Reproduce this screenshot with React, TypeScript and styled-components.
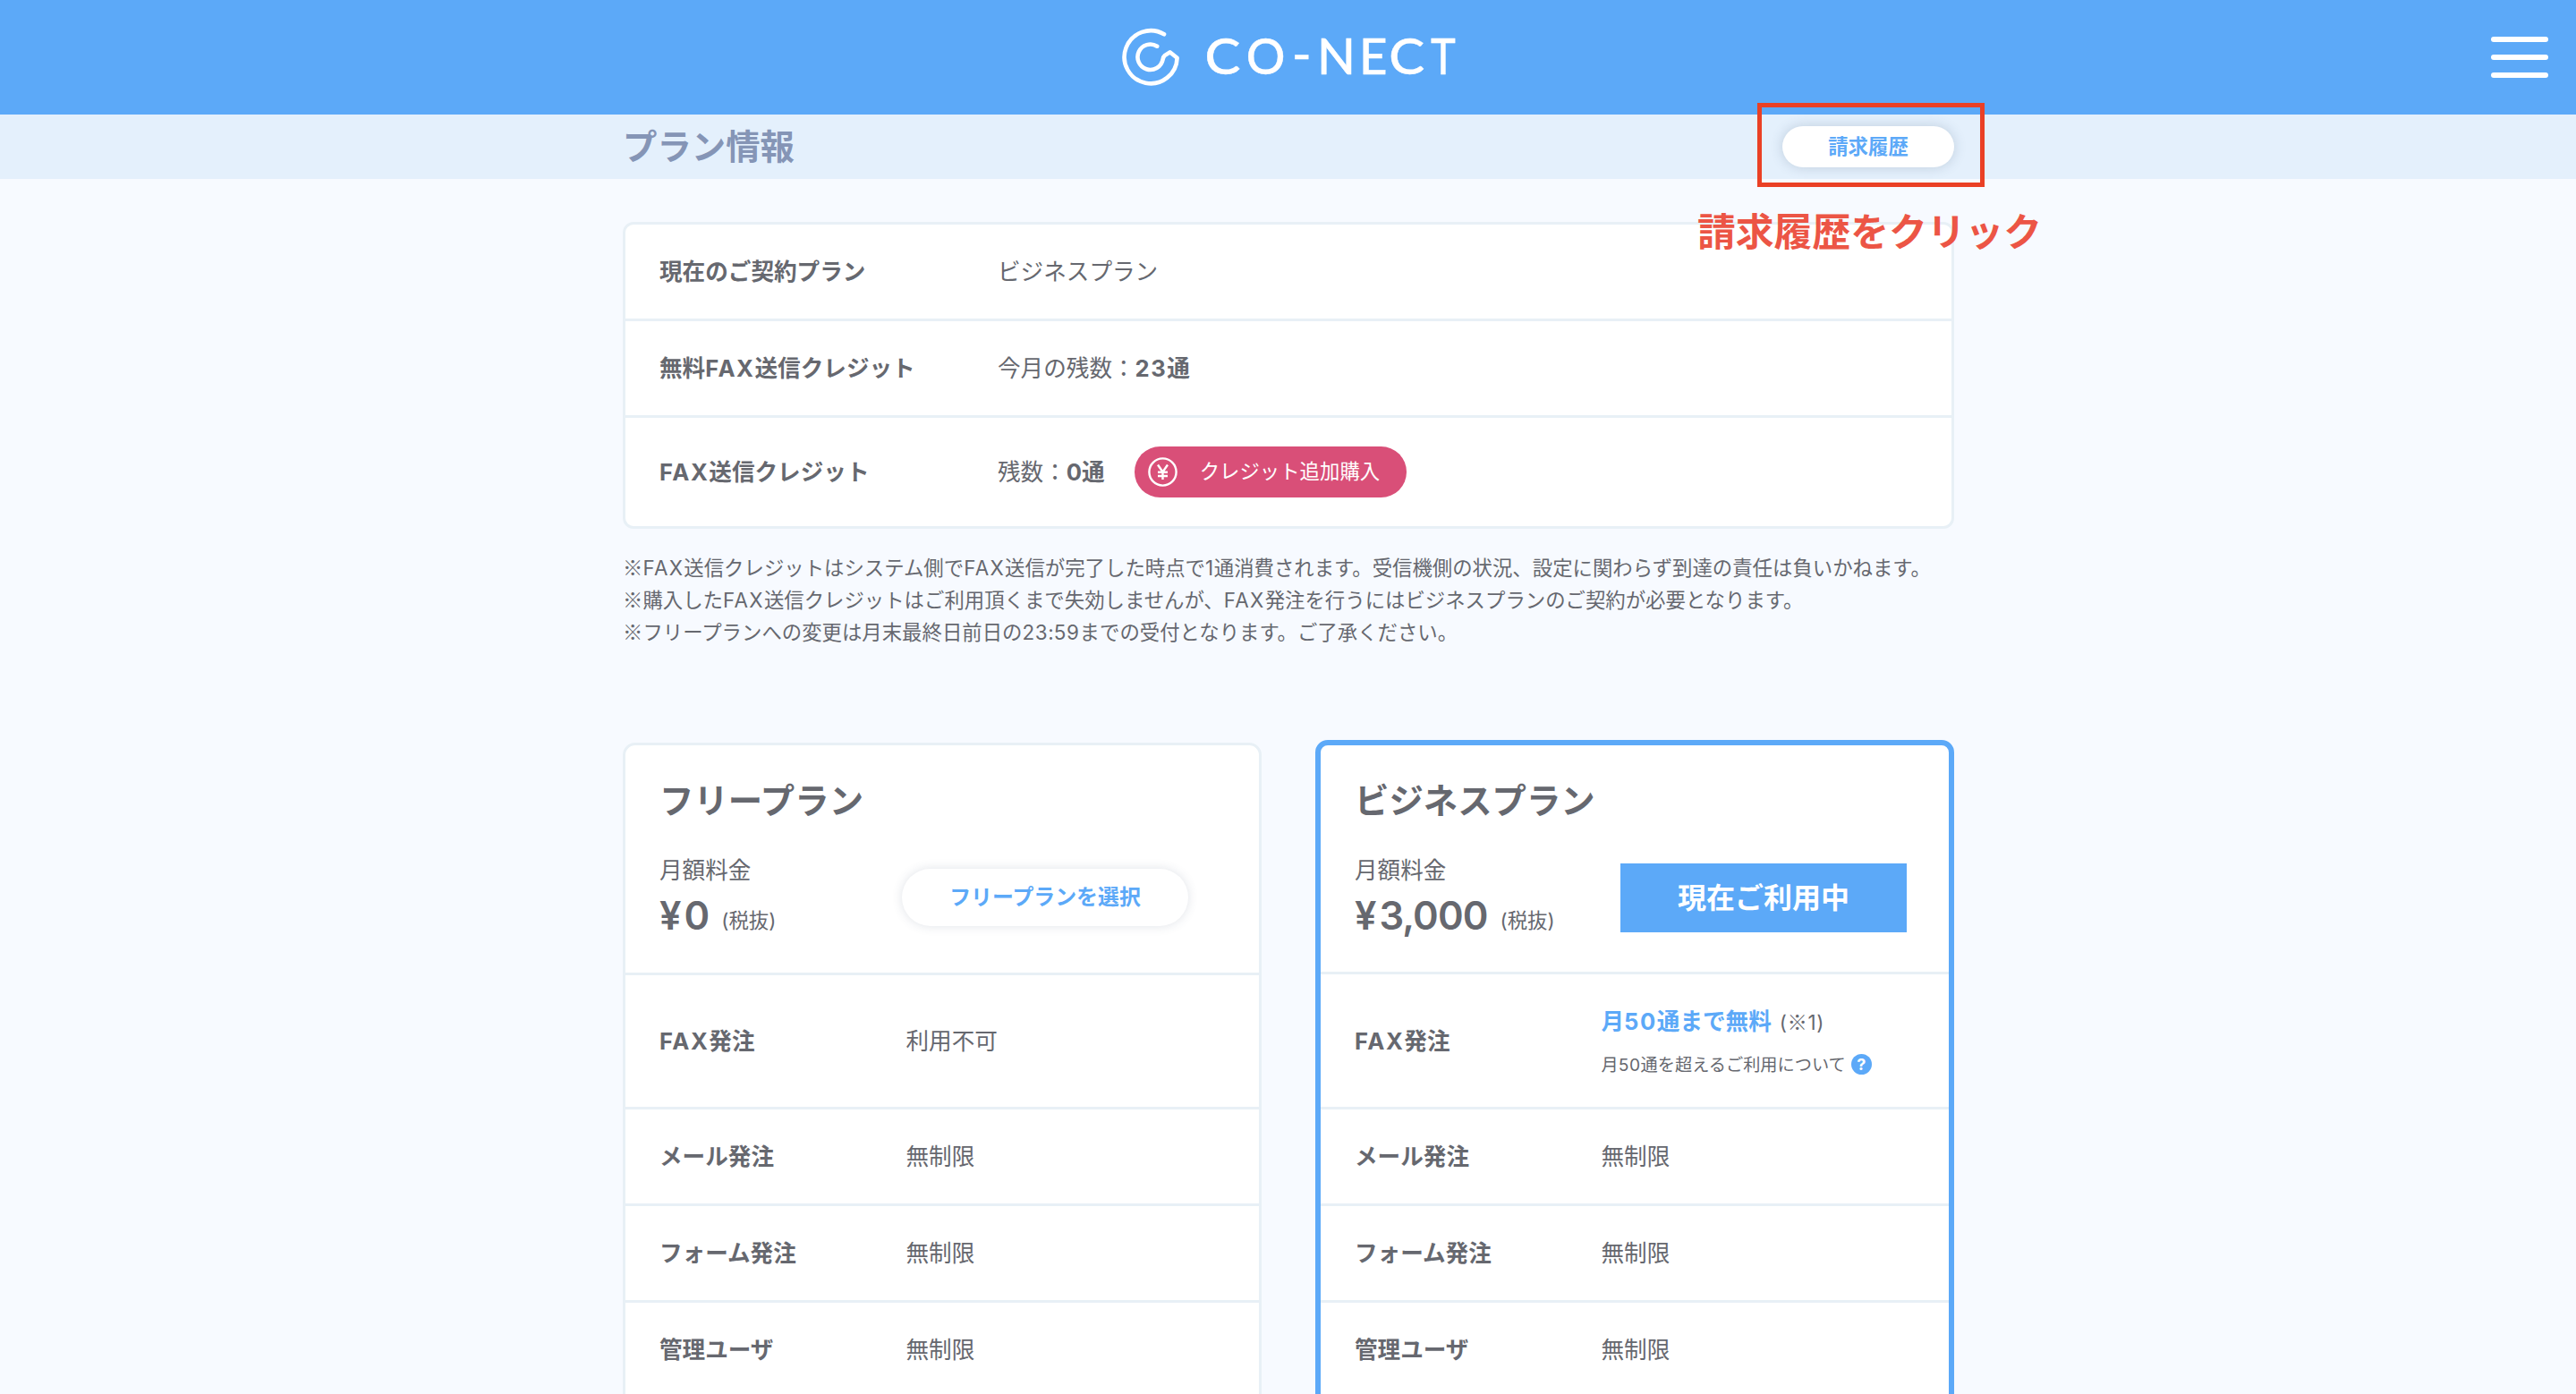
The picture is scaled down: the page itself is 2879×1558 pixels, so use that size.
import React from "react";
import styled, { createGlobalStyle, css } from "styled-components";

const color = {
  blue: "#5ca9f8",
  band: "#e4f0fc",
  page: "#f7faff",
  line: "#e8f0f6",
  text: "#66686f",
  title: "#8595b6",
  pink: "#d94f78",
  mark: "#ea4025",
  markText: "#ec5545",
};

const Global = createGlobalStyle`
  * { box-sizing: border-box; }
  body {
    margin: 0;
    background: ${color.page};
    color: ${color.text};
    font-family: Inter, "Noto Sans CJK JP", sans-serif;
    font-size: 25.6px;
    line-height: 1.6;
  }
  h1, h2, p, dl, dt, dd { margin: 0; }
  button { font-family: inherit; border: 0; padding: 0; }
`;

const Page = styled.div`
  position: relative;
  height: 1558px;
  overflow: hidden;
`;

const Header = styled.header`
  display: grid;
  grid-template-columns: 1fr auto 1fr;
  align-items: center;
  height: 128px;
  background: ${color.blue};
`;

const Logo = styled.svg`
  grid-column: 2;
  display: block;
  width: 440px;
  height: 80px;
  overflow: visible;
  text {
    font-family: Lato, sans-serif;
    font-size: 55px;
    font-weight: 500;
    fill: #fff;
    stroke: #fff;
    stroke-width: 0.4;
  }
`;

const MenuButton = styled.button`
  justify-self: end;
  display: flex;
  flex-direction: column;
  gap: 13.6px;
  width: 64px;
  margin-right: 31px;
  background: none;
`;

const MenuLine = styled.span`
  height: 6.6px;
  border-radius: 4px;
  background: #fff;
`;

const TitleBand = styled.div`
  height: 72px;
  background: ${color.band};
`;

const Container = styled.div`
  width: 1488px;
  margin: 0 auto 0 696px;
`;

const TitleRow = styled(Container)`
  display: flex;
  justify-content: space-between;
  align-items: center;
  height: 100%;
`;

const Title = styled.h1`
  font-size: 38.4px;
  line-height: 1;
  color: ${color.title};
`;

const PillButton = styled.button<{ $large?: boolean }>`
  width: ${(p) => (p.$large ? 320 : 192)}px;
  height: ${(p) => (p.$large ? 64 : 46)}px;
  border-radius: 32px;
  background: #fff;
  color: ${color.blue};
  font-size: ${(p) => (p.$large ? 23.9 : 22.4)}px;
  font-weight: 700;
  line-height: 1;
  box-shadow: 0 0 ${(p) => (p.$large ? 12 : 14)}px rgba(60, 80, 110, ${(p) => (p.$large ? 0.16 : 0.22)});
`;

const Summary = styled.dl`
  margin-top: 48px;
  border: 3px solid ${color.line};
  border-radius: 12px;
  background: #fff;
`;

const SummaryRow = styled.div<{ $height?: number }>`
  display: grid;
  grid-template-columns: 378px 1fr;
  align-items: center;
  height: ${(p) => p.$height ?? 108}px;
  padding-left: 38px;
  & + & { border-top: 3px solid ${color.line}; }
  &:first-child { height: 105px; }
`;

const Label = styled.dt`
  padding-top: 2px;
  font-weight: 700;
  white-space: nowrap;
`;

const Value = styled.dd`
  display: flex;
  align-items: center;
  padding-top: 2px;
  white-space: nowrap;
`;

const CreditButton = styled.button`
  display: flex;
  align-items: center;
  gap: 25px;
  width: 304px;
  height: 57px;
  margin: -2px 0 0 33px;
  padding-left: 15px;
  border-radius: 29px;
  background: ${color.pink};
  color: #fff;
  font-size: 22.4px;
  line-height: 1;
`;

const Notes = styled.div`
  margin-top: 26px;
  font-size: 22.4px;
  line-height: 36px;
  white-space: nowrap;
`;

const Plans = styled.div`
  display: grid;
  grid-template-columns: 714px 714px;
  column-gap: 60px;
  margin-top: 102px;
`;

const PlanCard = styled.section<{ $current?: boolean }>`
  height: 900px;
  background: #fff;
  border-radius: 14px;
  ${(p) =>
    p.$current
      ? css`
          border: 6px solid ${color.blue};
          --inset: 38px;
          --head: 253px;
        `
      : css`
          margin-top: 3px;
          border: 3px solid ${color.line};
          --inset: 38px;
          --head: 254px;
        `}
`;

const PlanHead = styled.div`
  height: var(--head);
  padding: 36px 0 0 var(--inset);
`;

const PlanName = styled.h2`
  font-size: 38.4px;
  line-height: 52px;
`;

const PriceRow = styled.div<{ $end: number }>`
  display: flex;
  justify-content: space-between;
  align-items: center;
  height: 100px;
  margin-top: 32px;
  padding-right: ${(p) => p.$end}px;
`;

const PriceCaption = styled.p`
  line-height: 40px;
`;

const Price = styled.p`
  display: flex;
  align-items: center;
  height: 60px;
  font-size: 22.4px;
  line-height: 60px;
  white-space: nowrap;
`;

const Yen = styled.strong`
  margin-right: 3px;
  font-size: 43.5px;
  font-weight: 600;
`;

const Amount = styled.strong`
  font-size: 43.5px;
  font-weight: 600;
  letter-spacing: -0.9px;
`;

const Tax = styled.span`
  padding: 12px 0 0 14px;
`;

const CurrentBadge = styled.div`
  width: 320px;
  height: 77px;
  background: ${color.blue};
  color: #fff;
  font-size: 32px;
  font-weight: 700;
  line-height: 77px;
  text-align: center;
`;

const PlanRow = styled.div<{ $height: number }>`
  display: grid;
  grid-template-columns: 275.5px 1fr;
  align-items: center;
  height: ${(p) => p.$height}px;
  padding-left: var(--inset);
  border-top: 3px solid ${color.line};
`;

const FaxDetail = styled.dd`
  display: flex;
  flex-direction: column;
  gap: 7px;
  padding-top: 5px;
  white-space: nowrap;
`;

const Quota = styled.p`
  display: flex;
  align-items: baseline;
  gap: 9px;
  line-height: 40px;
  font-size: 22.4px;
  letter-spacing: 0.6px;
  strong { font-size: 25.6px; letter-spacing: 0; color: ${color.blue}; }
`;

const QuotaHelp = styled.p`
  display: flex;
  align-items: center;
  gap: 6px;
  font-size: 19.2px;
  line-height: 40px;
`;

const HelpMark = styled.span`
  width: 23px;
  height: 23px;
  border-radius: 50%;
  background: ${color.blue};
  color: #fff;
  font-size: 18px;
  font-weight: 700;
  line-height: 23px;
  text-align: center;
`;

const Latin = styled.span`
  letter-spacing: 0.06em;
`;

const Digits = styled.span`
  letter-spacing: 0.03em;
  strong & { letter-spacing: 0.06em; }
`;

const Mark = styled.span`
  font-family: "Noto Sans CJK JP", sans-serif;
  line-height: 1;
`;

const Highlight = styled.div`
  position: absolute;
  left: 1964px;
  top: 115px;
  width: 254px;
  height: 94px;
  border: 5px solid ${color.mark};
`;

const Callout = styled.p`
  position: absolute;
  left: 1897px;
  top: 230px;
  font-size: 42.8px;
  font-weight: 700;
  line-height: 60px;
  white-space: nowrap;
  color: ${color.markText};
`;

/** Japanese text whose Latin letters, digits and reference marks get their own spacing. */
const Ja = ({ text }: { text: string }) => (
  <span>
    {text.split(/([A-Z]+|[0-9]+|※)/).map((part, i) => {
      if (/^[A-Z]/.test(part)) return <Latin key={i}>{part}</Latin>;
      if (/^[0-9]/.test(part)) return <Digits key={i}>{part}</Digits>;
      if (part === "※") return <Mark key={i}>{part}</Mark>;
      return part;
    })}
  </span>
);

const YenIcon = () => (
  <svg width="33" height="33" viewBox="0 0 33 33" fill="none" stroke="#fff" strokeWidth="2.4">
    <circle cx="16.5" cy="16.5" r="15.1" />
    <path d="M11 8.5 16.5 16.5 22 8.5M16.5 16.5V25M11 16.8H22M11 21H22" />
  </svg>
);

const wordmark = [
  { char: "C", x: 1346.5, width: 40, y: 83 },
  { char: "O", x: 1392.7, width: 43.7, y: 83 },
  { char: "-", x: 1443.8, width: 22, y: 80.5 },
  { char: "N", x: 1472, width: 43, y: 83 },
  { char: "E", x: 1519, width: 31.5, y: 83 },
  { char: "C", x: 1552.3, width: 40, y: 83 },
  { char: "T", x: 1599, width: 27.8, y: 83 },
];

const plainRows = ["メール発注", "フォーム発注", "管理ユーザ"];

const PlanRows = () => (
  <>
    {plainRows.map((label) => (
      <PlanRow key={label} $height={108}>
        <Label>{label}</Label>
        <Value>無制限</Value>
      </PlanRow>
    ))}
  </>
);

export default function App() {
  return (
    <Page>
      <Global />
      <Header>
        <Logo viewBox="1220 24 440 80">
          <path
            d="M1301 38.3A29.5 29.5 0 1 0 1315.6 64.8L1307.5 58.3 1301.6 62.2C1300 63.6 1300 64.8 1299.6 66.5A14.2 14.2 0 1 1 1293.2 51.7"
            fill="none"
            stroke="#fff"
            strokeWidth="4.6"
            strokeLinecap="round"
            strokeLinejoin="round"
          />
          {wordmark.map((g) => (
            <text key={g.x} x={g.x} y={g.y} textLength={g.width} lengthAdjust="spacingAndGlyphs">
              {g.char}
            </text>
          ))}
        </Logo>
        <MenuButton aria-label="メニュー">
          <MenuLine />
          <MenuLine />
          <MenuLine />
        </MenuButton>
      </Header>
      <TitleBand>
        <TitleRow>
          <Title>プラン情報</Title>
          <PillButton>請求履歴</PillButton>
        </TitleRow>
      </TitleBand>

      <Container>
        <Summary>
          <SummaryRow>
            <Label>現在のご契約プラン</Label>
            <Value>ビジネスプラン</Value>
          </SummaryRow>
          <SummaryRow>
            <Label><Ja text="無料FAX送信クレジット" /></Label>
            <Value>
              今月の残数：<strong><Ja text="23通" /></strong>
            </Value>
          </SummaryRow>
          <SummaryRow $height={124}>
            <Label><Ja text="FAX送信クレジット" /></Label>
            <Value>
              残数：<strong>0通</strong>
              <CreditButton>
                <YenIcon />
                クレジット追加購入
              </CreditButton>
            </Value>
          </SummaryRow>
        </Summary>

        <Notes>
          <p><Ja text="※FAX送信クレジットはシステム側でFAX送信が完了した時点で1通消費されます。受信機側の状況、設定に関わらず到達の責任は負いかねます。" /></p>
          <p><Ja text="※購入したFAX送信クレジットはご利用頂くまで失効しませんが、FAX発注を行うにはビジネスプランのご契約が必要となります。" /></p>
          <p><Ja text="※フリープランへの変更は月末最終日前日の23:59までの受付となります。ご了承ください。" /></p>
        </Notes>

        <Plans>
          <PlanCard>
            <PlanHead>
              <PlanName>フリープラン</PlanName>
              <PriceRow $end={79}>
                <div>
                  <PriceCaption>月額料金</PriceCaption>
                  <Price>
                    <Yen>¥</Yen>
                    <Amount>0</Amount>
                    <Tax>(税抜)</Tax>
                  </Price>
                </div>
                <PillButton $large>フリープランを選択</PillButton>
              </PriceRow>
            </PlanHead>
            <dl>
              <PlanRow $height={150}>
                <Label><Ja text="FAX発注" /></Label>
                <Value>利用不可</Value>
              </PlanRow>
              <PlanRows />
            </dl>
          </PlanCard>

          <PlanCard $current>
            <PlanHead>
              <PlanName>ビジネスプラン</PlanName>
              <PriceRow $end={47}>
                <div>
                  <PriceCaption>月額料金</PriceCaption>
                  <Price>
                    <Yen>¥</Yen>
                    <Amount>3,000</Amount>
                    <Tax>(税抜)</Tax>
                  </Price>
                </div>
                <CurrentBadge>現在ご利用中</CurrentBadge>
              </PriceRow>
            </PlanHead>
            <dl>
              <PlanRow $height={151}>
                <Label><Ja text="FAX発注" /></Label>
                <FaxDetail>
                  <Quota>
                    <strong><Ja text="月50通まで無料" /></strong>
                    <Ja text="(※1)" />
                  </Quota>
                  <QuotaHelp>
                    <Ja text="月50通を超えるご利用について" />
                    <HelpMark>?</HelpMark>
                  </QuotaHelp>
                </FaxDetail>
              </PlanRow>
              <PlanRows />
            </dl>
          </PlanCard>
        </Plans>
      </Container>

      <Highlight />
      <Callout>請求履歴をクリック</Callout>
    </Page>
  );
}
